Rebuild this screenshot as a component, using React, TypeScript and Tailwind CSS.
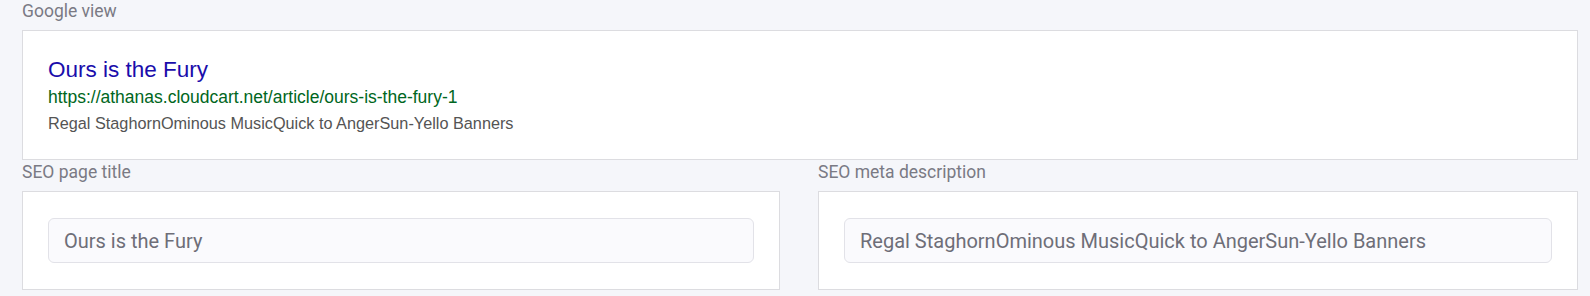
const title = "Ours is the Fury";
const url = "https://athanas.cloudcart.net/article/ours-is-the-fury-1";
const description = "Regal StaghornOminous MusicQuick to AngerSun-Yello Banners";

function Label({ children }: { children: React.ReactNode }) {
  return (
    <div className="mb-2 text-[17.5px] leading-[22px] text-[#7a7a84] [font-family:Roboto,sans-serif]">
      {children}
    </div>
  );
}

function Field({ label, value }: { label: string; value: string }) {
  return (
    <div>
      <Label>{label}</Label>
      <div className="border border-[#dcdce0] bg-white px-[25px] py-[26px]">
        <div className="flex h-[45px] items-center rounded-[6px] border border-[#e2e2e8] bg-[#fafafd] px-[15px] text-[20px] text-[#6e6e78] [font-family:Roboto,sans-serif]">
          {value}
        </div>
      </div>
    </div>
  );
}

function App() {
  return (
    <div className="h-[296px] bg-[#f5f6fa] pl-[22px] pr-[12px]">
      <Label>Google view</Label>
      <div className="border border-[#dcdce0] bg-white px-[25px] py-[26px] [font-family:'Liberation_Sans',Arial,sans-serif]">
        <div className="text-[22.5px] leading-[26px] text-[#1a0dab]">{title}</div>
        <div className="mt-[4px] text-[17.5px] leading-[21px] text-[#006621]">{url}</div>
        <div className="mt-[5px] text-[16.25px] leading-[20px] text-[#545454]">{description}</div>
      </div>
      <div className="mt-px grid grid-cols-[758px_1fr] gap-[38px]">
        <Field label="SEO page title" value={title} />
        <Field label="SEO meta description" value={description} />
      </div>
    </div>
  );
}

export default App;
